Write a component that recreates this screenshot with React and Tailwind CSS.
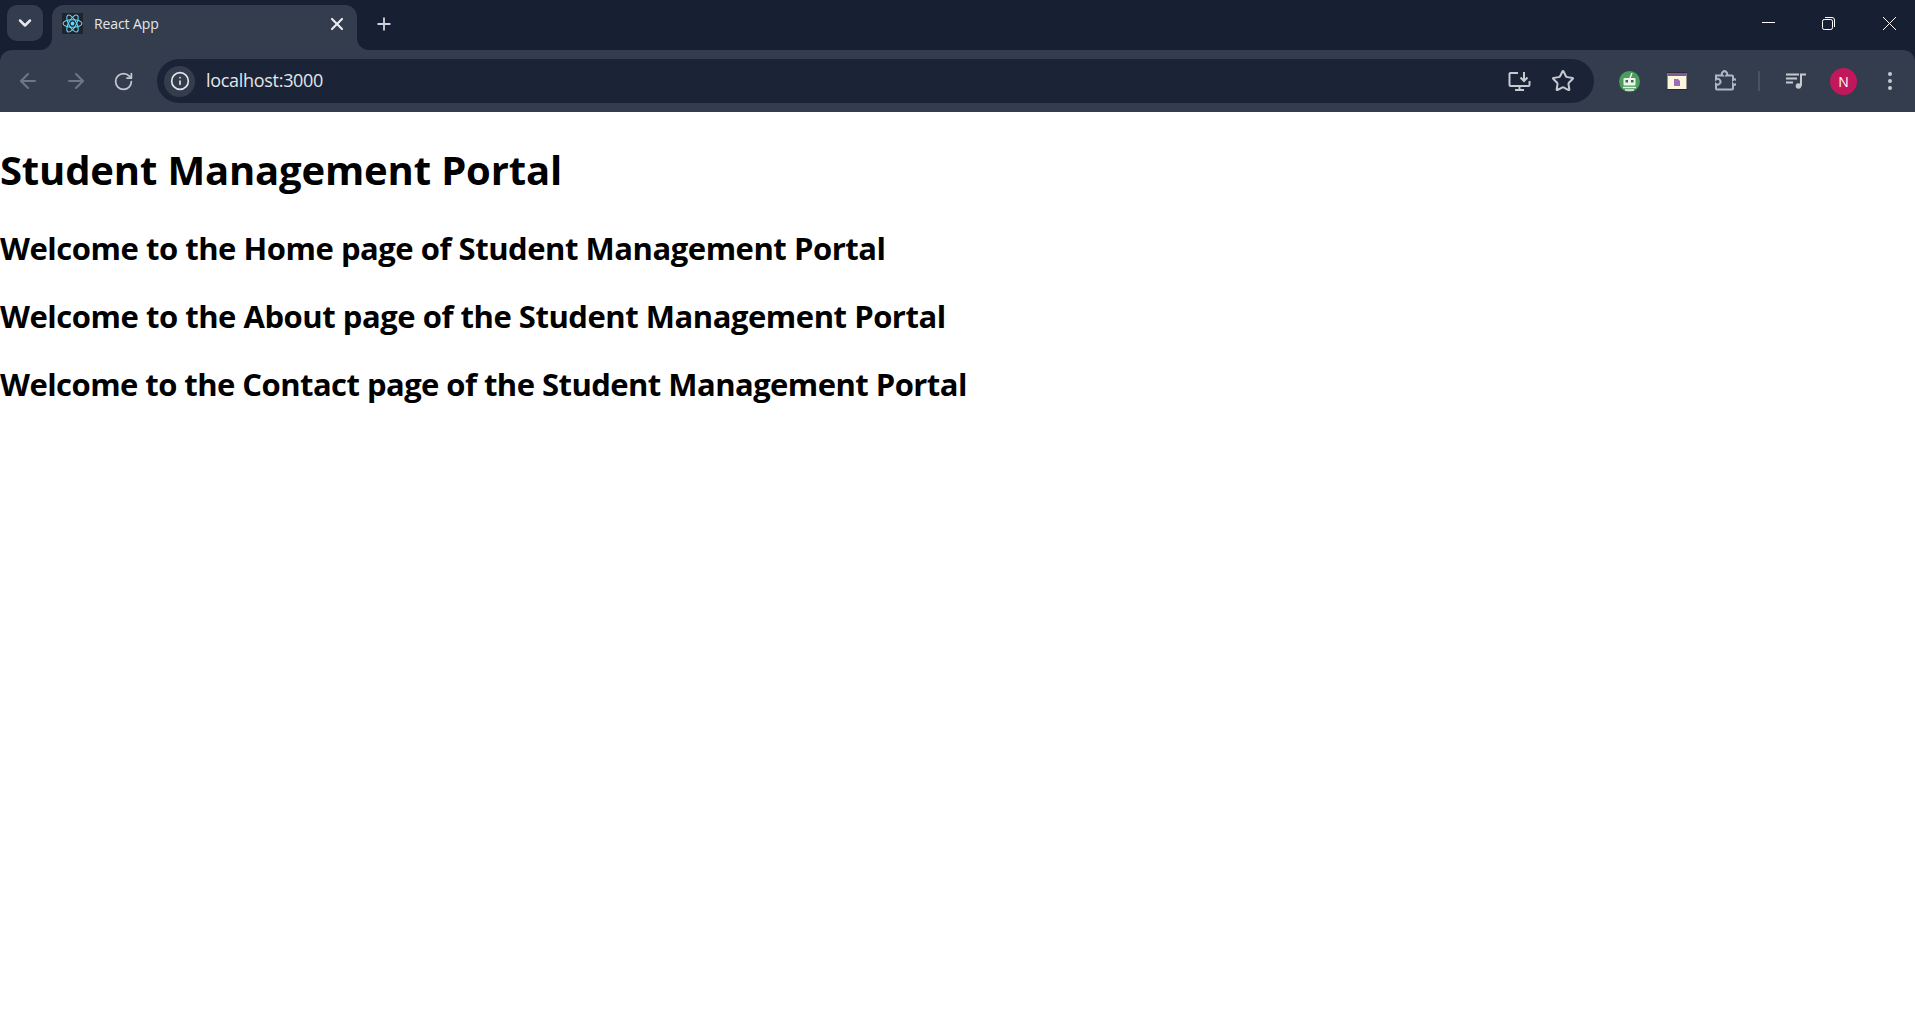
import React from 'react';
import { ArrowLeft, ArrowRight, RotateCw, Info, Plus, X, ChevronDown, Star } from 'lucide-react';

function ReactIcon() {
  return (
    <div className="w-[21px] h-[21px] bg-[#20232a] flex items-center justify-center shrink-0">
      <svg viewBox="-12 -12 24 24" className="w-[21px] h-[21px]" fill="none" stroke="#61dafb" strokeWidth="1.2">
        <circle r="2.2" fill="#61dafb" stroke="none" />
        <ellipse rx="10.8" ry="4.3" />
        <ellipse rx="10.8" ry="4.3" transform="rotate(60)" />
        <ellipse rx="10.8" ry="4.3" transform="rotate(120)" />
      </svg>
    </div>
  );
}

function TabStrip() {
  return (
    <div className="h-[50px] bg-[#172033] flex items-start">
      <div className="w-[36px] h-[36px] ml-[7px] mt-[5px] rounded-[10px] bg-[#343d4e] flex items-center justify-center">
        <ChevronDown size={20} strokeWidth={3} className="text-[#e4e7ec]" />
      </div>
      <div className="w-[305px] h-[45px] ml-[9px] mt-[5px] rounded-t-[12px] bg-[#343d4e] flex items-center pl-[10px] pr-[10px] pb-[8px] relative">
        {/* flared bottom corners of the active tab */}
        <div className="absolute -left-[12px] bottom-0 w-[12px] h-[12px] bg-[#343d4e]">
          <div className="w-full h-full bg-[#172033] rounded-br-[12px]" />
        </div>
        <div className="absolute -right-[12px] bottom-0 w-[12px] h-[12px] bg-[#343d4e]">
          <div className="w-full h-full bg-[#172033] rounded-bl-[12px]" />
        </div>
        <ReactIcon />
        <span className="ml-[11px] text-[14px] text-[#e3e6ea] font-['Open_Sans',sans-serif] tracking-[-0.1px]">React App</span>
        <X size={20} strokeWidth={2.6} className="ml-auto text-[#e8eaee]" />
      </div>
      <Plus size={20} strokeWidth={2.2} className="ml-[17px] mt-[14px] text-[#d0d4da]" />
      <div className="ml-auto flex items-center mt-[17px] mr-[19px]">
        <svg width="13" height="13" viewBox="0 0 13 13" fill="none" stroke="#fff" strokeWidth="1" className="-mt-[3px]">
          <path d="M0 6.500h13" />
        </svg>
        <svg width="13" height="13" viewBox="0 0 13 13" fill="none" stroke="#fff" strokeWidth="1" className="ml-[47px]">
          <rect x="0.5" y="2.5" width="10" height="10" rx="1.8" />
          <path d="M3 0.5h7a2.500 2.500 0 0 1 2.500 2.500v7" />
        </svg>
        <svg width="13" height="13" viewBox="0 0 13 13" fill="none" stroke="#fff" strokeWidth="1" className="ml-[48px]">
          <path d="M0 0l13 13M13 0L0 13" />
        </svg>
      </div>
    </div>
  );
}

function RobotIcon() {
  return (
    <svg width="21" height="21" viewBox="0 0 21 21" className="ml-[25px] shrink-0">
      <circle cx="10.5" cy="10.5" r="10.5" fill="#4a9d5b" />
      <path d="M11 7l2-5" stroke="#f2f6f0" strokeWidth="1.4" fill="none" />
      <rect x="4.500" y="7" width="12" height="7.500" rx="1" fill="#eef3ec" />
      <rect x="6.500" y="9" width="2.500" height="2.500" fill="#2f6e3e" />
      <rect x="12" y="9" width="2.500" height="2.500" fill="#2f6e3e" />
      <path d="M4 16.500h13M6 19h9" stroke="#e6f0e6" strokeWidth="1.3" fill="none" />
    </svg>
  );
}

function WindowIcon() {
  return (
    <svg width="20" height="18" viewBox="0 0 20 18" className="ml-[27px] shrink-0">
      <rect x="0" y="0" width="20" height="18" fill="#2a2a34" />
      <rect x="0.500" y="1" width="19" height="16" fill="#fdf6df" />
      <rect x="0.500" y="1" width="19" height="3" fill="#7e5a96" />
      <path d="M7 7h4l2 2v5H7z" fill="#9a6fb5" />
    </svg>
  );
}

function Toolbar() {
  return (
    <div className="h-[62px] bg-[#343d4e] rounded-t-[12px] flex items-center">
      <ArrowLeft size={24} className="ml-[16px] text-[#6f7684] shrink-0" />
      <ArrowRight size={24} className="ml-[24px] text-[#6f7684] shrink-0" />
      <RotateCw size={21} className="ml-[25px] text-[#c3c7cf] shrink-0" />
      <div className="ml-[23px] h-[44px] flex-1 rounded-full bg-[#1b2436] flex items-center pl-[7px] pr-[19px]">
        <div className="w-[31px] h-[31px] rounded-full bg-[#343d4e] flex items-center justify-center">
          <Info size={20} className="text-[#e3e6ea]" />
        </div>
        <span className="ml-[11px] -mt-[1px] text-[18px] text-[#e3e6ea] font-['Open_Sans',sans-serif] tracking-[-0.3px]">localhost:3000</span>
        <svg width="23" height="21" viewBox="0 0 23 21" fill="none" stroke="#c5c9d0" strokeWidth="2" className="ml-auto">
          <path d="M10 2H2.500a1 1 0 0 0-1 1v11a1 1 0 0 0 1 1h18a1 1 0 0 0 1-1v-4" />
          <path d="M7 19h9M11.500 15v4" />
          <path d="M16 1v9M12.500 6.500l3.500 3.500 3.500-3.500" />
        </svg>
        <Star size={24} strokeWidth={2} className="ml-[20px] text-[#c5c9d0]" />
      </div>
      <RobotIcon />
      <WindowIcon />
      <svg width="22" height="22" viewBox="0 0 22 22" fill="none" stroke="#aeb6c8" strokeWidth="2" className="ml-[27px] shrink-0">
        <path d="M2 5.500h6.500a2.600 2.600 0 1 1 4 0H18a1 1 0 0 1 1 1v3.500a2.600 2.600 0 1 1 0 4v4.500a1 1 0 0 1-1 1H3a1 1 0 0 1-1-1v-4.500a2.800 2.800 0 1 0 0-4.500z" />
      </svg>
      <div className="ml-[22px] w-[2px] h-[20px] bg-[#4a5261] shrink-0" />
      <svg width="22" height="18" viewBox="0 0 22 18" fill="none" stroke="#c5c9d0" strokeWidth="2" className="ml-[25px] shrink-0">
        <path d="M1 2.500h13M1 6.500h11M1 10.500h7" />
        <path d="M16 14V2.500h5" />
        <circle cx="13.500" cy="14" r="2.800" fill="#c5c9d0" stroke="none" />
      </svg>
      <div className="ml-[23px] w-[27px] h-[27px] rounded-full bg-[#c2185b] text-white text-[14px] flex items-center justify-center font-['Open_Sans',sans-serif] shrink-0">N</div>
      <div className="ml-[31px] mr-[23px] flex flex-col gap-[3px] shrink-0">
        <div className="w-[4px] h-[4px] rounded-full bg-[#c5c9d0]" />
        <div className="w-[4px] h-[4px] rounded-full bg-[#c5c9d0]" />
        <div className="w-[4px] h-[4px] rounded-full bg-[#c5c9d0]" />
      </div>
    </div>
  );
}

export default function App() {
  return (
    <div className="min-h-screen bg-white font-['Open_Sans',sans-serif] text-black">
      <div className="bg-white">
        <TabStrip />
        <div className="bg-[#172033]">
          <Toolbar />
        </div>
      </div>
      <h1 className="text-[40px] font-bold leading-[53px] mt-[31px] tracking-[-0.16px]">Student Management Portal</h1>
      <h2 className="text-[31px] font-bold leading-[43px] mt-[31px] tracking-[-0.47px]">Welcome to the Home page of Student Management Portal</h2>
      <h2 className="text-[31px] font-bold leading-[43px] mt-[25px] tracking-[-0.47px]">Welcome to the About page of the Student Management Portal</h2>
      <h2 className="text-[31px] font-bold leading-[43px] mt-[25px] tracking-[-0.55px]">Welcome to the Contact page of the Student Management Portal</h2>
    </div>
  );
}
